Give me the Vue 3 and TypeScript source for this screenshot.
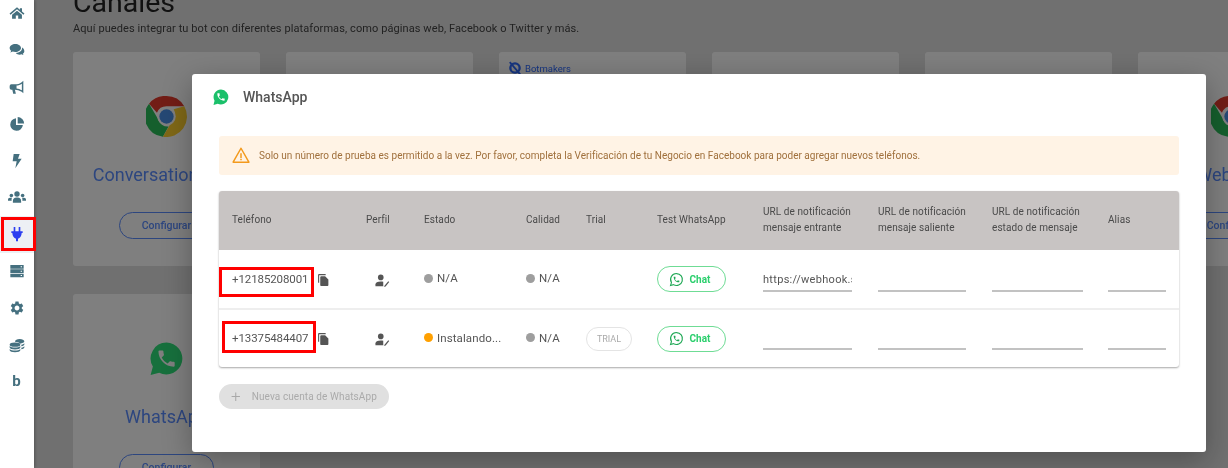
<script setup lang="ts">
interface Card { id: number; name?: string; logo?: 'chrome' | 'whatsapp'; tag?: string }
interface Row { phone: string; state: string; stateColor: string; trial: boolean; url: string; boxClass: string }

const cards: Card[] = [
  { id: 1, name: 'Conversations API', logo: 'chrome' },
  { id: 2 },
  { id: 3, tag: 'Botmakers' },
  { id: 4 },
  { id: 5 },
  { id: 6, name: 'Webchat', logo: 'chrome' },
  { id: 7, name: 'WhatsApp', logo: 'whatsapp' },
]

const rows: Row[] = [
  { phone: '+12185208001', state: 'N/A', stateColor: '#9e9e9e', trial: false, url: 'https://webhook.site', boxClass: 'box-a' },
  { phone: '+13375484407', state: 'Instalando...', stateColor: '#ffa000', trial: true, url: '', boxClass: 'box-b' },
]

const nav = ['home', 'comments', 'horn', 'pie', 'bolt', 'users', 'plug', 'server', 'cog', 'coins', 'b']
const phonePath = 'M6.62 10.79c1.44 2.83 3.76 5.14 6.59 6.59l2.2-2.2c.27-.27.67-.36 1.02-.24 1.12.37 2.33.57 3.57.57.55 0 1 .45 1 1V20c0 .55-.45 1-1 1-9.39 0-17-7.61-17-17 0-.55.45-1 1-1h3.5c.55 0 1 .45 1 1 0 1.25.2 2.45.57 3.57.11.35.03.74-.25 1.02l-2.2 2.2z'
</script>

<template>
  <div class="page">
    <nav class="side">
      <div v-for="item in nav" :key="item" class="nav-item" :class="{ active: item === 'plug' }">
        <svg v-if="item === 'home'" viewBox="0 0 24 24"><path d="M12 3.5 .8 12.7l1.5 1.8L12 6.5l9.7 8 1.5-1.8-3.7-3V4.8h-3.2v2.3z" /><path d="M12 8.6 4.6 14.7v6h5.6v-5h3.6v5h5.6v-6z" /></svg>
        <svg v-else-if="item === 'comments'" viewBox="0 0 24 24"><path d="M9.5 3C4.8 3 1 5.7 1 9c0 1.6.9 3 2.3 4.1-.3 1-.9 1.900-1.600 2.600 1.500-.1 2.900-.7 4-1.400 1.100.4 2.400.7 3.800.7 4.700 0 8.500-2.700 8.500-6S14.200 3 9.500 3z" /><path d="M19.600 8.200c.1.300.1.500.1.800 0 4-4.200 7.200-9.500 7.500 1.300 1.600 3.500 2.500 5.800 2.500 1 0 2-.2 2.800-.5 1 .6 2 1 3.200 1.100-.6-.6-1-1.300-1.300-2.100 1.300-.9 2.300-2.200 2.300-3.800 0-2.500-1.400-4.600-3.400-5.500z" /></svg>
        <svg v-else-if="item === 'horn'" viewBox="0 0 24 24"><path d="M21.500 2.500 19 4.700c-3 2.500-6.500 3.300-9.500 3.300H3.500A2.500 2.500 0 0 0 1 10.500v3A2.500 2.500 0 0 0 3.500 16H5l1.300 6h4l-1.400-6c3.200.1 6.900.9 10.100 3.300l2.500 2.200zM19.300 7v10c-2.500-1.700-5.200-2.600-8-2.900V9.900c2.800-.3 5.500-1.200 8-2.900z" /></svg>
        <svg v-else-if="item === 'pie'" viewBox="0 0 24 24"><path d="M10.500 3.200a9.500 9.500 0 1 0 10.300 10.300H10.500z" /><path d="M13 1.500v9.700h9.700A9.700 9.700 0 0 0 13 1.500z" /></svg>
        <svg v-else-if="item === 'bolt'" viewBox="0 0 24 24"><path d="M7 1.500h9l-2.500 7H19L9.500 23l2-10.500H5.500z" /></svg>
        <svg v-else-if="item === 'users'" class="wide" viewBox="0 0 24 24"><circle cx="12" cy="8" r="3.600" /><path d="M6.500 19.500v-2a5 5 0 0 1 5-5h1a5 5 0 0 1 5 5v2z" /><circle cx="4.500" cy="10" r="2.400" /><circle cx="19.500" cy="10" r="2.400" /><path d="M0 17v-1.500C0 14 1.200 13 2.700 13h2.500a7 7 0 0 0-.3 4zM24 17v-1.500c0-1.500-1.200-2.500-2.700-2.500h-2.500a7 7 0 0 1 .3 4z" /></svg>
        <svg v-else-if="item === 'plug'" viewBox="0 0 24 24"><path d="M7 1.500h2.500V8h5V1.500H17V8h3.500v2.500H19c0 4.500-2.500 7.500-5.500 8.500v4h-3v-4C7.500 18 5 15 5 10.500H3.500V8H7z" /></svg>
        <svg v-else-if="item === 'server'" viewBox="0 0 24 24"><path d="M2 3h20v5.500H2zM2 9.500h20V15H2zM2 16h20v5.500H2z" /><path class="cut" d="M17.500 5h2v1.500h-2zM17.500 11.500h2V13h-2zM17.500 18h2v1.500h-2z" /></svg>
        <svg v-else-if="item === 'cog'" viewBox="0 0 24 24"><path d="M19.140 12.940c.04-.3.06-.61.06-.94 0-.32-.02-.64-.07-.94l2.030-1.580a.49.49 0 0 0 .12-.61l-1.920-3.320a.488.488 0 0 0-.59-.22l-2.390.96c-.5-.38-1.030-.7-1.620-.94l-.36-2.540a.484.484 0 0 0-.48-.41h-3.840c-.24 0-.43.17-.47.41l-.36 2.540c-.59.24-1.130.57-1.620.94l-2.390-.96c-.22-.08-.47 0-.59.22L2.740 8.870c-.12.21-.08.47.12.61l2.030 1.580c-.05.3-.09.63-.09.94s.02.64.07.94l-2.030 1.580a.49.49 0 0 0-.12.61l1.920 3.320c.12.22.37.29.59.22l2.390-.96c.5.38 1.030.7 1.620.94l.36 2.540c.05.24.24.41.48.41h3.840c.24 0 .44-.17.47-.41l.36-2.540c.59-.24 1.130-.56 1.620-.94l2.390.96c.22.08.47 0 .59-.22l1.920-3.320c.12-.22.07-.47-.12-.61l-2.010-1.580zM12 15.600c-1.980 0-3.600-1.620-3.600-3.600s1.620-3.600 3.600-3.600 3.600 1.620 3.600 3.600-1.620 3.600-3.600 3.600z" /></svg>
        <svg v-else-if="item === 'coins'" viewBox="0 0 24 24"><ellipse cx="9" cy="11.500" rx="8" ry="3.200" /><path d="M1 13.500c1.500 1.600 4.500 2.400 8 2.400s6.500-.8 8-2.400v2.300c0 1.700-3.600 3-8 3s-8-1.300-8-3z" /><path d="M1 18c1.500 1.500 4.500 2.300 8 2.300s6.500-.8 8-2.300v1.800c0 1.700-3.600 3-8 3s-8-1.300-8-3z" /><path d="M9 6.500c0-2 3.200-3.500 7-3.500s7 1.500 7 3.500-3 3.300-6.500 3.500C15 8.300 12 7.300 9 7.200zM18.500 11.500c2-.4 3.600-1.200 4.500-2.200v2.100c0 1.100-1.800 2.100-4.500 2.500zM18.500 16c2-.4 3.600-1.200 4.500-2.200v2.100c0 1.100-1.800 2.100-4.500 2.500z" /></svg>
        <span v-else class="nav-b">b</span>
      </div>
    </nav>

    <main class="content">
      <h1 class="title">Canales</h1>
      <p class="lead">Aquí puedes integrar tu bot con diferentes plataformas, como páginas web, Facebook o Twitter y más.</p>
      <section class="cards">
        <article v-for="card in cards" :key="card.id" class="card">
          <div v-if="card.tag" class="tag">
            <svg viewBox="0 0 24 24"><circle cx="12" cy="12" r="8" fill="none" stroke="#2e6aff" stroke-width="4" /><path d="M3 2 21 23" stroke="#2e6aff" stroke-width="3" /></svg>
            {{ card.tag }}
          </div>
          <template v-if="card.name">
            <svg v-if="card.logo === 'chrome'" class="logo" viewBox="0 0 40 40">
              <path d="M20 0a20 20 0 0 1 17.300 10H20a10 10 0 0 0-9.300 6.300L3 7.500A20 20 0 0 1 20 0z" fill="#e53a2c" />
              <path d="M3 7.500l8.700 15A10 10 0 0 0 22 29.800L16.500 39.700A20 20 0 0 1 3 7.500z" fill="#2bbf5a" />
              <path d="M37.300 10A20 20 0 0 1 16.500 39.700l8.800-15A10 10 0 0 0 27 13z" fill="#ffd02e" />
              <circle cx="20" cy="20" r="9" fill="#fff" /><circle cx="20" cy="20" r="7" fill="#4a90e8" />
            </svg>
            <svg v-else class="logo" viewBox="0 0 40 40">
              <path d="M20 4.500a15.500 15.500 0 0 0-13.300 23.400L4.500 36l8.400-2.200A15.500 15.500 0 1 0 20 4.500z" fill="#2fe07a" />
              <path :d="phonePath" transform="translate(9.500 9.500) scale(.88)" fill="#fff" />
            </svg>
            <h2 class="card-name">{{ card.name }}</h2>
            <button class="outline">Configurar</button>
          </template>
        </article>
      </section>
    </main>

    <div class="scrim"></div>

    <section class="modal">
      <header class="modal-head">
        <svg class="wa-small" viewBox="0 0 24 24">
          <path d="M12 2a10 10 0 0 0-8.600 15L2 22.500l5.600-1.400A10 10 0 1 0 12 2z" fill="#1bc06a" />
          <path :d="phonePath" transform="translate(5.500 5.500) scale(.54)" fill="#fff" />
        </svg>
        <span>WhatsApp</span>
      </header>

      <div class="alert">
        <svg viewBox="0 0 24 24"><path d="M12 3 1.500 21.500h21z" fill="none" stroke="#f39a1d" stroke-width="2" stroke-linejoin="round" /><path d="M11 9.500h2V16h-2zM11 17h2v2h-2z" fill="#f39a1d" /></svg>
        <span>Solo un número de prueba es permitido a la vez. Por favor, completa la Verificación de tu Negocio en Facebook para poder agregar nuevos teléfonos.</span>
      </div>

      <div class="table">
        <div class="t-row t-head">
          <div>Teléfono</div>
          <div>Perfil</div>
          <div>Estado</div>
          <div>Calidad</div>
          <div>Trial</div>
          <div>Test WhatsApp</div>
          <div>URL de notificación<br />mensaje entrante</div>
          <div>URL de notificación<br />mensaje saliente</div>
          <div>URL de notificación<br />estado de mensaje</div>
          <div>Alias</div>
        </div>
        <div v-for="row in rows" :key="row.phone" class="t-row t-body">
          <div class="phone">
            <span>{{ row.phone }}</span>
            <svg class="copy" viewBox="0 0 24 24"><path d="M16 1H4c-1.100 0-2 .9-2 2v14h2V3h12V1zm-1 4 6 6v10c0 1.100-.9 2-2 2H7.990C6.890 23 6 22.100 6 21l.01-14c0-1.100.89-2 1.990-2h7z" /></svg>
            <i class="mark" :class="row.boxClass"></i>
          </div>
          <div>
            <svg class="profile" viewBox="0 0 24 24"><circle cx="10" cy="7" r="4.500" /><path d="M1.500 21v-2.500c0-3 3-5 8.500-5 1.500 0 2.800.1 4 .5v7z" /><path d="M16 20.500 22 13l1.500 1.200-5.700 7.300-3 .5z" /></svg>
          </div>
          <div class="status"><i :style="{ background: row.stateColor }"></i>{{ row.state }}</div>
          <div class="status"><i class="grey"></i>N/A</div>
          <div><span v-if="row.trial" class="trial">TRIAL</span></div>
          <div>
            <button class="chat">
              <svg viewBox="0 0 24 24"><path d="M12 2.500a9.500 9.500 0 0 0-8.100 14.400L2.500 21.500l4.700-1.300A9.500 9.500 0 1 0 12 2.500z" fill="none" stroke="#1fa855" stroke-width="1.800" /><path :d="phonePath" transform="translate(6 6) scale(.5)" fill="#1fa855" /></svg>
              Chat
            </button>
          </div>
          <div class="field f1"><span>{{ row.url }}</span></div>
          <div class="field f2"></div>
          <div class="field f3"></div>
          <div class="field f4"></div>
        </div>
      </div>

      <button class="add"><span class="plus">+</span>Nueva cuenta de WhatsApp</button>
    </section>
  </div>
</template>

<style>
html, body { margin: 0; height: 100%; overflow: hidden; background: #e0e0e0; }
</style>

<style scoped>
.page {
  position: relative;
  display: flex;
  width: 1228px;
  height: 468px;
  overflow: hidden;
  font-family: Roboto, "Liberation Sans", sans-serif;
  color: #333;
  filter: blur(.3px);
}
.side {
  position: relative;
  z-index: 3;
  flex: 0 0 34px;
  display: flex;
  flex-direction: column;
  background: #fff;
  box-shadow: 1px 0 3px rgba(0, 0, 0, .25);
}
.nav-item {
  flex: 0 0 36.800px;
  position: relative;
  top: -5px;
  display: flex;
  align-items: center;
  justify-content: center;
  padding-right: 1px;
  color: #45707f;
  box-sizing: border-box;
}
.nav-item svg { width: 16px; height: 16px; fill: currentColor; }
.nav-item svg.wide { width: 18px; height: 18px; }
.nav-item svg .cut { fill: #fff; }
.nav-b { font-size: 15px; font-weight: 700; }
.nav-item.active { color: #2d3ff0; background: #edf0f4; }
.nav-item.active::after {
  content: "";
  position: absolute;
  left: 1px;
  top: 1px;
  width: 35px;
  height: 34px;
  box-sizing: border-box;
  border: 3px solid #f00;
}
.content { flex: 1; padding-left: 39px; min-width: 0; }
.title {
  margin: -14px 0 0;
  font-size: 28.500px;
  line-height: 34px;
  font-weight: 400;
  color: #222;
}
.lead {
  margin: 2px 0 0;
  font-size: 11px;
  line-height: 14px;
  color: #444;
  letter-spacing: .09px;
}
.cards {
  display: grid;
  grid-template-columns: repeat(6, 187px);
  column-gap: 26px;
  row-gap: 28px;
  margin-top: 16px;
}
.card {
  position: relative;
  display: flex;
  flex-direction: column;
  align-items: center;
  height: 214px;
  background: #fff;
  border-radius: 3px;
  box-sizing: border-box;
  padding-top: 44px;
}
.tag {
  position: absolute;
  left: 9px;
  top: 9px;
  display: flex;
  align-items: center;
  gap: 3px;
  font-size: 9.500px;
  color: #2e6aff;
}
.tag svg { width: 14px; height: 14px; }
.logo { width: 41px; height: 41px; flex: none; }
.card-name {
  margin: 26px 0 0;
  font-size: 18px;
  line-height: 24px;
  font-weight: 400;
  color: #5a8cff;
  white-space: nowrap;
}
.outline {
  margin-top: 25px;
  flex: none;
  width: 95px;
  height: 27px;
  border: 1px solid #5a8cff;
  border-radius: 14px;
  background: transparent;
  font: 500 10.500px Roboto, sans-serif;
  color: #5a8cff;
  padding: 0;
}
.scrim { position: absolute; inset: 0; z-index: 1; background: rgba(0, 0, 0, .5); }
.modal {
  position: absolute;
  z-index: 2;
  left: 192px;
  top: 74px;
  width: 1014px;
  height: 378px;
  box-sizing: border-box;
  padding: 0 27px;
  background: #fff;
  border-radius: 3px;
  box-shadow: 0 8px 30px rgba(0, 0, 0, .3);
}
.modal-head {
  display: flex;
  align-items: center;
  height: 46px;
  margin-left: -7px;
  gap: 13px;
  font-size: 14px;
  font-weight: 500;
  color: #555;
}
.wa-small { width: 18px; height: 18px; }
.alert {
  display: flex;
  align-items: center;
  gap: 9px;
  margin-top: 16px;
  height: 39px;
  padding-left: 13px;
  padding-bottom: 1px;
  box-sizing: border-box;
  background: #fff3e5;
  border-radius: 3px;
  font-size: 10px;
  letter-spacing: .015px;
  color: #a0703c;
}
.alert svg { width: 18px; height: 18px; flex: none; }
.table {
  margin-top: 16px;
  border-radius: 3px;
  box-shadow: 0 1px 2px rgba(0, 0, 0, .35);
}
.t-row {
  display: grid;
  grid-template-columns: 134px 58px 102px 60px 71px 106px 115px 114px 116px 58px;
  padding: 0 13px;
  align-items: center;
}
.t-head {
  height: 59px;
  padding-bottom: 2px;
  box-sizing: border-box;
  background: #c8c4c3;
  border-radius: 3px 3px 0 0;
  font-size: 10px;
  line-height: 16px;
  letter-spacing: .08px;
  color: #4a4a4a;
}
.t-body { height: 58px; font-size: 11.500px; color: #555; }
.t-body + .t-body { height: 59px; border-top: 2px solid #eee; box-sizing: border-box; }
.t-body + .t-body .field { margin-top: -1px; }
.phone { position: relative; display: flex; align-items: center; gap: 9px; margin-top: -1px; letter-spacing: -.1px; color: #555; }
.copy { width: 13px; height: 14px; fill: #555; margin-top: 2px; }
.mark { position: absolute; border: 3px solid #f00; box-sizing: border-box; }
.box-a { left: -13px; top: -4px; width: 95px; height: 30px; }
.box-b { left: -10px; top: -9px; width: 94px; height: 32px; }
.profile { display: block; width: 16px; height: 15px; fill: #555; margin: 2px 0 0 8px; }
.status { display: flex; align-items: center; gap: 4px; margin-top: -2px; font-size: 11.500px; letter-spacing: .1px; }
.status i { width: 9px; height: 9px; border-radius: 50%; flex: none; }
.status i.grey { background: #9e9e9e; }
.trial {
  display: inline-block;
  width: 46px;
  height: 24px;
  line-height: 22px;
  box-sizing: border-box;
  text-align: center;
  border: 1px solid #e4e4e4;
  border-radius: 12px;
  font-size: 9px;
  color: #aaa;
}
.chat {
  display: flex;
  align-items: center;
  justify-content: center;
  gap: 6px;
  width: 69px;
  height: 26px;
  padding: 0 4px 0 0;
  background: #fff;
  border: 1.500px solid #6fdc95;
  border-radius: 13px;
  font: 700 10px Roboto, sans-serif;
  color: #2bcf6d;
}
.chat svg { width: 15px; height: 15px; }
.field {
  box-sizing: border-box;
  height: 24px;
  margin-top: 1px;
  overflow: hidden;
  border-bottom: 2px solid #c2c2c2;
  font-size: 11px;
  line-height: 23px;
  letter-spacing: .3px;
  white-space: nowrap;
}
.f1 { width: 89px; }
.f2 { width: 88px; }
.f3 { width: 91px; }
.f4 { width: 58px; }
.add {
  display: flex;
  align-items: center;
  gap: 11px;
  margin-top: 17px;
  width: 170px;
  height: 25px;
  padding: 0 0 0 12px;
  background: #e0e0e0;
  border: 0;
  border-radius: 13px;
  font: 400 10px Roboto, sans-serif;
  letter-spacing: .1px;
  color: #aaa;
}
.plus { font-size: 17px; line-height: 1; color: #a8a8a8; font-weight: 300; }
</style>
